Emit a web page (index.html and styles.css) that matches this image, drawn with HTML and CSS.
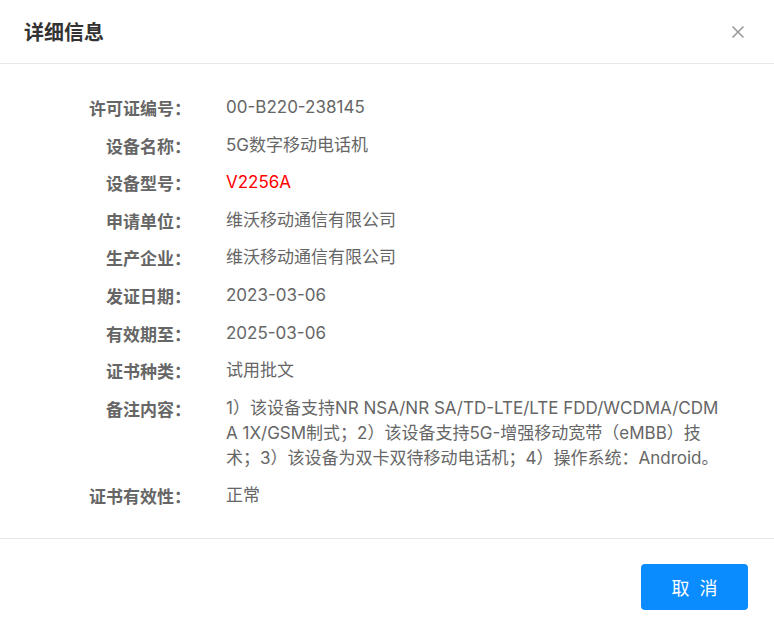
FILE: index.html
```html
<!DOCTYPE html>
<html lang="zh">
<head>
<meta charset="utf-8">
<title>详细信息</title>
<link rel="stylesheet" href="styles.css">
</head>
<body>
<div class="dialog">
  <div class="header">
    <div class="title">详细信息</div>
    <button class="close" aria-label="关闭">
      <svg width="14" height="14" viewBox="0 0 14 14"><path d="M1.5 1.5 L12.5 12.5 M12.5 1.5 L1.5 12.5" stroke="#999" stroke-width="1.6" fill="none"/></svg>
    </button>
  </div>
  <div class="body">
    <dl class="info">
      <dt>许可证编号：</dt><dd>00-B220-238145</dd>
      <dt>设备名称：</dt><dd>5G数字移动电话机</dd>
      <dt>设备型号：</dt><dd class="red">V2256A</dd>
      <dt>申请单位：</dt><dd>维沃移动通信有限公司</dd>
      <dt>生产企业：</dt><dd>维沃移动通信有限公司</dd>
      <dt>发证日期：</dt><dd>2023-03-06</dd>
      <dt>有效期至：</dt><dd>2025-03-06</dd>
      <dt>证书种类：</dt><dd>试用批文</dd>
      <dt>备注内容：</dt><dd class="wrap">1）该设备支持NR NSA/NR SA/TD-LTE/LTE FDD/WCDMA/CDM<br>A 1X/GSM制式；2）该设备支持5G-增强移动宽带（eMBB）技<br>术；3）该设备为双卡双待移动电话机；4）操作系统：Android。</dd>
      <dt>证书有效性：</dt><dd>正常</dd>
    </dl>
  </div>
  <div class="footer">
    <button class="btn">取 消</button>
  </div>
</div>
</body>
</html>
```
FILE: styles.css
```css
* { box-sizing: border-box; }
html, body { margin: 0; padding: 0; background: #fff; }
body {
  font-family: "Inter", "Noto Sans CJK SC", sans-serif;
  width: 774px;
  height: 623px;
  overflow: hidden;
}
.dialog {
  width: 774px;
  height: 623px;
  display: flex;
  flex-direction: column;
  background: #fff;
}
.header {
  height: 64px;
  border-bottom: 1px solid #e8e8e8;
  display: flex;
  align-items: center;
  justify-content: space-between;
  padding: 0 29px 0 24px;
}
.title {
  font-family: "Noto Sans CJK SC", sans-serif;
  font-size: 20px;
  font-weight: bold;
  color: #333;
  line-height: 26px;
}
.close {
  border: 0;
  background: none;
  padding: 0;
  width: 14px;
  height: 14px;
  display: flex;
  cursor: pointer;
}
.body {
  flex: 1;
  padding: 31px 0 0 0;
  border-bottom: 1px solid #e8e8e8;
}
.info {
  margin: 0;
  display: grid;
  grid-template-columns: 191px 528px;
  column-gap: 35px;
  row-gap: 12.6px;
  font-size: 17px;
  line-height: 25px;
}
.info dt {
  font-family: "Noto Sans CJK SC", sans-serif;
  text-align: right;
  font-weight: bold;
  color: #666;
}
.info dd {
  margin: 0;
  color: #666;
}
.info dd.red { color: #ff0000; }
.info dd.wrap { white-space: nowrap; }
.footer {
  height: 84px;
  display: flex;
  justify-content: flex-end;
  align-items: flex-start;
  padding: 25px 26px 0 0;
}
.btn {
  width: 107px;
  height: 46px;
  border: 0;
  border-radius: 4px;
  background: #0a8cff;
  color: #fff;
  font-family: "Noto Sans CJK SC", sans-serif;
  font-size: 18px;
  letter-spacing: 3px;
  text-indent: 3px;
  cursor: pointer;
}
```
